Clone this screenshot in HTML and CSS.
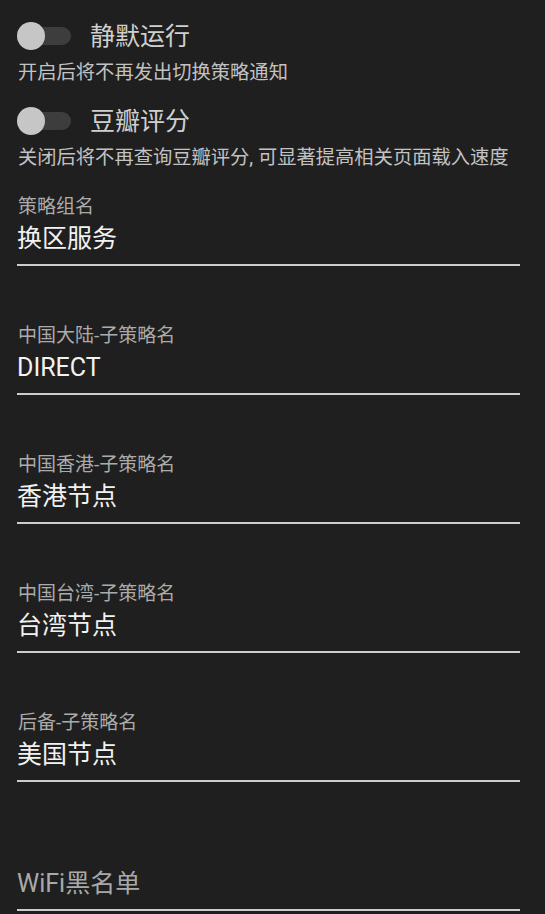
FILE: index.html
```html
<!DOCTYPE html>
<html lang="zh-CN">
<head>
<meta charset="utf-8">
<link rel="stylesheet" href="styles.css">
</head>
<body>
<div class="page">
  <div class="switch-row">
    <span class="switch"><span class="track"></span><span class="thumb"></span></span>
    <span class="switch-title">静默运行</span>
  </div>
  <div class="desc">开启后将不再发出切换策略通知</div>
  <div class="switch-row second">
    <span class="switch"><span class="track"></span><span class="thumb"></span></span>
    <span class="switch-title">豆瓣评分</span>
  </div>
  <div class="desc">关闭后将不再查询豆瓣评分, 可显著提高相关页面载入速度</div>

  <div class="field first">
    <div class="label">策略组名</div>
    <div class="value">换区服务</div>
  </div>
  <div class="field">
    <div class="label">中国大陆-子策略名</div>
    <div class="value">DIRECT</div>
  </div>
  <div class="field">
    <div class="label">中国香港-子策略名</div>
    <div class="value">香港节点</div>
  </div>
  <div class="field">
    <div class="label">中国台湾-子策略名</div>
    <div class="value">台湾节点</div>
  </div>
  <div class="field">
    <div class="label">后备-子策略名</div>
    <div class="value">美国节点</div>
  </div>
  <div class="field">
    <div class="label"></div>
    <div class="value placeholder">WiFi黑名单</div>
  </div>
</div>
</body>
</html>
```
FILE: styles.css
```css
html, body {
  margin: 0;
  padding: 0;
  background: #1f1f1f;
}
body {
  font-family: Roboto, "Noto Sans CJK SC", sans-serif;
  width: 545px;
  height: 914px;
  overflow: hidden;
}
.page {
  padding: 12px 25px 0 17px;
}
.switch-row {
  display: flex;
  align-items: center;
  height: 48px;
}
.switch-row.second {
  margin-top: 13px;
}
.switch {
  position: relative;
  width: 54px;
  height: 28px;
  flex: none;
}
.track {
  position: absolute;
  left: 12px;
  right: 0;
  top: 5px;
  height: 18px;
  border-radius: 9px;
  background: #3d3d3d;
}
.thumb {
  position: absolute;
  left: 0;
  top: 0;
  width: 28px;
  height: 28px;
  border-radius: 50%;
  background: #c6c6c6;
}
.switch-title {
  margin-left: 19px;
  margin-top: 2px;
  font-size: 25px;
  color: #cfcfcf;
  line-height: 32px;
}
.desc {
  font-size: 19.3px;
  line-height: 24px;
  color: #c2c2c2;
  white-space: nowrap;
  margin-left: 1px;
  padding-top: 1px;
  height: 23px;
}
.field {
  margin-top: 57px;
  border-bottom: 2px solid #cdcdcd;
  padding-bottom: 9px;
}
.field.first {
  margin-top: 25px;
}
.label {
  font-size: 19px;
  line-height: 24px;
  height: 24px;
  padding-top: 1px;
  color: #ababab;
  margin-left: 1px;
}
.value {
  margin-top: 4px;
  font-size: 25px;
  line-height: 32px;
  color: #f2f2f2;
}
.value.placeholder {
  color: #a9a9a9;
}
```
